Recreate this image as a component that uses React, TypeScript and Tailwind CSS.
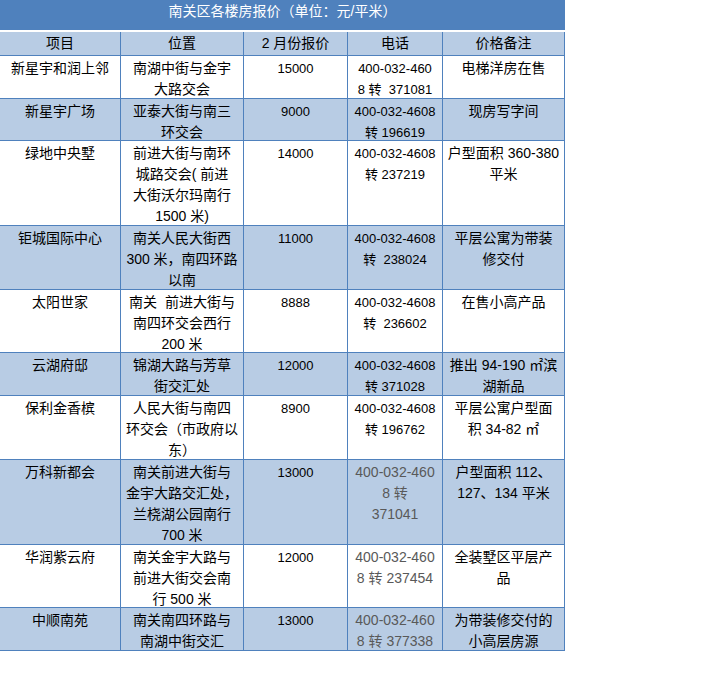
import React from "react";

interface Row {
  name: string
  place: string[]
  price: string
  phone: string[]
  note: string[]
  h: string
  alt: boolean
  grayPhone?: boolean
}

const rows: Row[] = [
  { name: "新星宇和润上邻", place: ["南湖中街与金宇", "大路交会"], price: "15000", phone: ["400-032-460", "8 转  371081"], note: ["电梯洋房在售"], h: "h-[43px]", alt: false },
  { name: "新星宇广场", place: ["亚泰大街与南三", "环交会"], price: "9000", phone: ["400-032-4608", "转 196619"], note: ["现房写字间"], h: "h-[42px]", alt: true },
  { name: "绿地中央墅", place: ["前进大街与南环", "城路交会( 前进", "大街沃尔玛南行", "1500 米)"], price: "14000", phone: ["400-032-4608", "转 237219"], note: ["户型面积 360-380", "平米"], h: "h-[85px]", alt: false },
  { name: "钜城国际中心", place: ["南关人民大街西", "300 米，南四环路", "以南"], price: "11000", phone: ["400-032-4608", "转  238024"], note: ["平层公寓为带装", "修交付"], h: "h-[64px]", alt: true },
  { name: "太阳世家", place: ["南关  前进大街与", "南四环交会西行", "200 米"], price: "8888", phone: ["400-032-4608", "转  236602"], note: ["在售小高产品"], h: "h-[63px]", alt: false },
  { name: "云湖府邸", place: ["锦湖大路与芳草", "街交汇处"], price: "12000", phone: ["400-032-4608", "转 371028"], note: ["推出 94-190 ㎡滨", "湖新品"], h: "h-[43px]", alt: true },
  { name: "保利金香槟", place: ["人民大街与南四", "环交会（市政府以", "东）"], price: "8900", phone: ["400-032-4608", "转 196762"], note: ["平层公寓户型面", "积 34-82 ㎡"], h: "h-[64px]", alt: false },
  { name: "万科新都会", place: ["南关前进大街与", "金宇大路交汇处，", "兰桡湖公园南行", "700 米"], price: "13000", phone: ["400-032-460", "8 转", "371041"], note: ["户型面积 112、", "127、134 平米"], h: "h-[85px]", alt: true, grayPhone: true },
  { name: "华润紫云府", place: ["南关金宇大路与", "前进大街交会南", "行 500 米"], price: "12000", phone: ["400-032-460", "8 转 237454"], note: ["全装墅区平层产", "品"], h: "h-[63px]", alt: false, grayPhone: true },
  { name: "中顺南苑", place: ["南关南四环路与", "南湖中街交汇"], price: "13000", phone: ["400-032-460", "8 转 377338"], note: ["为带装修交付的", "小高层房源"], h: "h-[43px]", alt: true, grayPhone: true },
]

const Lines = ({ lines }: { lines: string[] }) => (
  <>
    {lines.map((l, i) => (
      <div key={i} className="whitespace-pre">{l}</div>
    ))}
  </>
)

export default function App() {
  return (
    <div className="w-[705px] h-[673px] bg-white font-['Liberation_Sans','Noto_Sans_CJK_SC',sans-serif] text-[14px] leading-[21px] text-black">
      <div className="w-[565px] h-[30px] bg-[#4f81bd] text-white text-center pt-px">
        南关区各楼房报价（单位：元/平米）
      </div>
      <div className="mt-[2px] w-[565px] grid grid-cols-[121px_123px_104px_95px_122px]">
        {["项目", "位置", "2 月份报价", "电话", "价格备注"].map((t) => (
          <div
            key={t}
            className="h-[24px] bg-[#b8cce4] border-r border-b border-[#4f81bd] flex items-center justify-center whitespace-pre"
          >
            {t}
          </div>
        ))}
        {rows.map((r) => {
          const cell = `${r.h} ${r.alt ? "bg-[#b8cce4]" : "bg-white"} border-r border-b border-[#4f81bd] text-center pt-[2px]`
          return (
            <React.Fragment key={r.name}>
              <div className={cell}>{r.name}</div>
              <div className={cell}>
                <Lines lines={r.place} />
              </div>
              <div className={`${cell} text-[13px]`}>{r.price}</div>
              <div className={`${cell} ${r.grayPhone ? "text-[#595959] text-[14px]" : "text-[13px]"}`}>
                <Lines lines={r.phone} />
              </div>
              <div className={cell}>
                <Lines lines={r.note} />
              </div>
            </React.Fragment>
          )
        })}
      </div>
    </div>
  )
}
